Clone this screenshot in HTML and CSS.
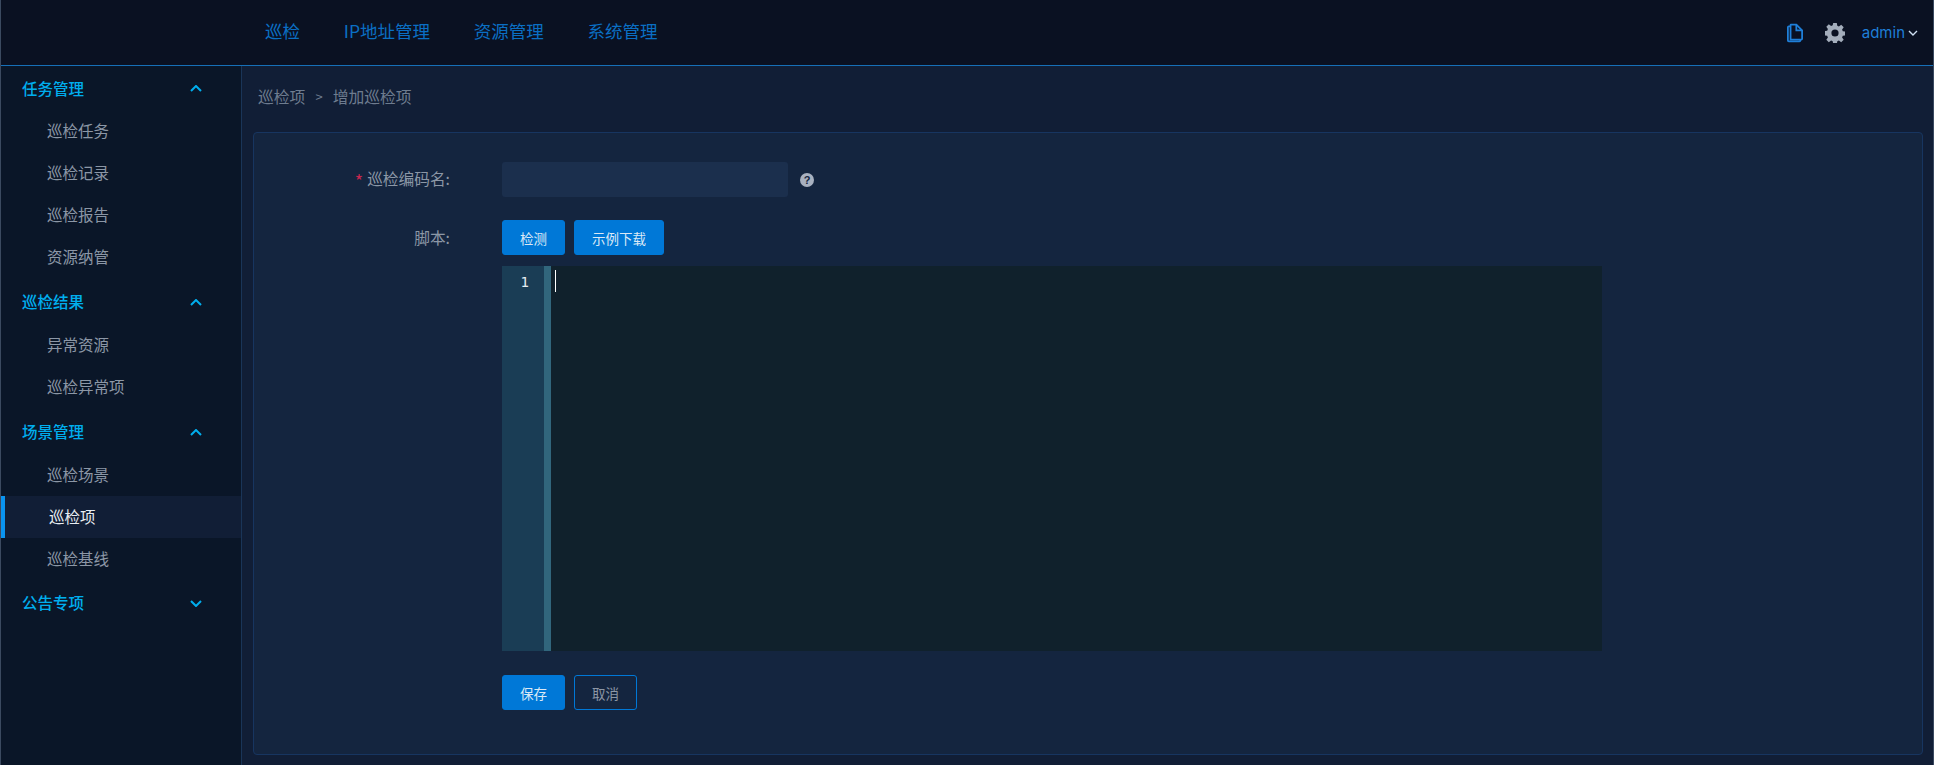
FILE: index.html
```html
<!DOCTYPE html>
<html lang="zh">
<head>
<meta charset="utf-8">
<title>增加巡检项</title>
<link rel="stylesheet" href="styles.css">
</head>
<body>
<div class="app">
  <header class="topbar">
    <nav class="topnav">
      <a>巡检</a><a>IP地址管理</a><a>资源管理</a><a>系统管理</a>
    </nav>
    <div class="tools">
      <svg class="doc" width="16" height="20" viewBox="0 0 18 21" fill="none" stroke="#1f7fd8" stroke-width="2"><path d="M4 3V1.500A.5.5 0 0 1 4.500 1H10.500L17 7.500V17a1 1 0 0 1-1 1H4z"/><path d="M10.500 1V7.500H17"/><path d="M4 3H2a1 1 0 0 0-1 1V19a1 1 0 0 0 1 1H14a1 1 0 0 0 1-1V18"/></svg>
      <svg class="gear" width="20" height="20" viewBox="0 0 20 20"><path fill="#a3adbb" fill-rule="evenodd" d="M8.200 0h3.600l.5 2.700 1.600.7 2.300-1.600 2.500 2.500-1.600 2.300.7 1.600 2.700.5v3.600l-2.700.5-.7 1.600 1.600 2.300-2.500 2.500-2.300-1.600-1.600.7-.5 2.700H8.200l-.5-2.700-1.600-.7-2.300 1.600-2.500-2.500 1.600-2.300-.7-1.600-2.700-.5V8.200l2.700-.5.7-1.600L1.300 3.800l2.500-2.500 2.300 1.600 1.600-.7zM10 6.400a3.600 3.600 0 1 0 0 7.200 3.600 3.600 0 0 0 0-7.200z"/></svg>
      <span class="user">admin<svg width="10" height="6" viewBox="0 0 10 6" fill="none" stroke="#cfe0f2" stroke-width="1.400"><path d="M1 1l4 4 4-4"/></svg></span>
    </div>
  </header>
  <div class="body">
    <aside class="sidebar">
      <div class="group">
        <div class="ghead">任务管理<svg class="chev" width="12" height="7" viewBox="0 0 12 7"><path d="M1 6l5-5 5 5"/></svg></div>
        <a class="item">巡检任务</a><a class="item">巡检记录</a><a class="item">巡检报告</a><a class="item">资源纳管</a>
      </div>
      <div class="group">
        <div class="ghead">巡检结果<svg class="chev" width="12" height="7" viewBox="0 0 12 7"><path d="M1 6l5-5 5 5"/></svg></div>
        <a class="item">异常资源</a><a class="item">巡检异常项</a>
      </div>
      <div class="group">
        <div class="ghead">场景管理<svg class="chev" width="12" height="7" viewBox="0 0 12 7"><path d="M1 6l5-5 5 5"/></svg></div>
        <a class="item">巡检场景</a><a class="item active">巡检项</a><a class="item">巡检基线</a>
      </div>
      <div class="group">
        <div class="ghead">公告专项<svg class="chev" width="12" height="7" viewBox="0 0 12 7"><path d="M1 1l5 5 5-5"/></svg></div>
      </div>
    </aside>
    <main class="main">
      <div class="crumbs"><span>巡检项</span><i>&gt;</i><span>增加巡检项</span></div>
      <section class="card">
        <div class="row row-name">
          <label class="lbl"><b>*</b>巡检编码名:</label>
          <div class="ctl"><div class="input"></div><span class="help">?</span></div>
        </div>
        <div class="row row-script">
          <label class="lbl">脚本:</label>
          <div class="ctl col">
            <div class="btns"><button class="btn primary">检测</button><button class="btn primary">示例下载</button></div>
            <div class="editor">
              <div class="gutter">1</div>
              <div class="fold"></div>
              <div class="code"><span class="cursor"></span></div>
            </div>
            <div class="btns actions"><button class="btn primary">保存</button><button class="btn ghost">取消</button></div>
          </div>
        </div>
      </section>
    </main>
  </div>
</div>
</body>
</html>
```
FILE: styles.css
```css
* { box-sizing: border-box; }
html, body { margin: 0; height: 100%; }
body {
  background: #111e36;
  font-family: "Noto Sans CJK SC", "Noto Sans", sans-serif;
  overflow: hidden;
}
.app {
  height: 765px;
  display: flex;
  flex-direction: column;
  border-left: 1px solid #3b4a60;
  border-right: 1px solid #3b4a60;
}
.topbar {
  height: 66px;
  flex: none;
  display: flex;
  align-items: center;
  justify-content: space-between;
  background: #0a1122;
  border-bottom: 1px solid #1670b8;
  padding-left: 264px;
  padding-right: 15px;
}
.topnav { display: flex; gap: 43.800px; font-size: 17.500px; color: #0a6fc4; padding-bottom: 4px; }
.tools { display: flex; align-items: center; }
.doc { margin-right: 22px; }
.gear { margin-right: 17px; }
.user { display: flex; align-items: center; gap: 3px; color: #1f7fd8; font: 15px "Inter", sans-serif; }
.body { flex: 1; display: flex; min-height: 0; }
.sidebar {
  width: 241px;
  flex: none;
  background: #0a1628;
  border-right: 1px solid #1a3558;
}
.group { margin-bottom: 2px; }
.ghead {
  height: 44px;
  display: flex;
  align-items: center;
  justify-content: space-between;
  padding: 0 39px 2px 21px;
  font-size: 15.500px;
  font-weight: 500;
  color: #00aeee;
}
.group:first-child .ghead { padding-bottom: 0; }
.group:last-child .ghead { padding-bottom: 4px; }
.chev { fill: none; stroke: #00aeee; stroke-width: 2; margin-top: 2px; }
.group:first-child .chev { margin-top: 0; }
.item {
  display: flex;
  align-items: center;
  height: 42px;
  padding-left: 46px;
  padding-bottom: 3px;
  font-size: 15.500px;
  color: #8c97a6;
}
.item.active {
  background: #111e36;
  color: #e8edf2;
  padding-left: 44px;
  border-left: 4px solid #0a94f0;
}
.main { flex: 1; min-width: 0; padding: 0 10px 10px 11px; display: flex; flex-direction: column; }
.crumbs {
  height: 66px;
  padding: 0 0 6px 5px;
  flex: none;
  display: flex;
  align-items: center;
  font-size: 15.800px;
  color: #6e7c8f;
}
.crumbs i { font-style: normal; font-size: 13px; margin: 0 10px; }
.card {
  flex: 1;
  background: #14253f;
  border: 1px solid #173560;
  border-radius: 4px;
  padding: 29px 0 0;
}
.row { display: flex; }
.row-name { margin-bottom: 23px; }
.lbl {
  width: 196px;
  flex: none;
  height: 35px;
  line-height: 34px;
  text-align: right;
  font-size: 15.700px;
  color: #8c97a6;
  margin-right: 52px;
}
.row-script .lbl { line-height: 36px; }
.lbl b {
  color: #c8274f;
  font-weight: 400;
  font-size: 18px;
  line-height: 0;
  margin-right: 4px;
  vertical-align: -3px;
}
.ctl { display: flex; align-items: center; }
.ctl.col { display: block; }
.input { width: 286px; height: 35px; background: #1b2f4d; border-radius: 3px; }
.help {
  width: 14px;
  height: 14px;
  margin-left: 12px;
  border-radius: 50%;
  background: #a8b1c0;
  color: #14253f;
  font: 700 11px/14px "Liberation Sans", sans-serif;
  text-align: center;
}
.btns { display: flex; gap: 9px; }
.btn {
  height: 35px;
  min-width: 63px;
  padding: 0 17px;
  border-radius: 3px;
  border: 1px solid #0078d7;
  font: 13.500px "Noto Sans CJK SC", sans-serif;
}
.primary { background: #0078d7; color: #dbe9f6; }
.ghost { background: transparent; color: #8c97a6; }
.editor { width: 1100px; height: 385px; margin-top: 11px; display: flex; background: #10212c; }
.gutter {
  width: 42px;
  background: #1a3d55;
  color: #e4edf2;
  font: 14px/24px "DejaVu Sans Mono", monospace;
  text-align: right;
  padding: 4px 15px 0 0;
}
.fold { width: 7px; background: #31667c; }
.code { flex: 1; padding: 4px 0 0 4px; }
.cursor { display: block; width: 1px; height: 22px; background: #fff; }
.actions { margin-top: 24px; }
```
